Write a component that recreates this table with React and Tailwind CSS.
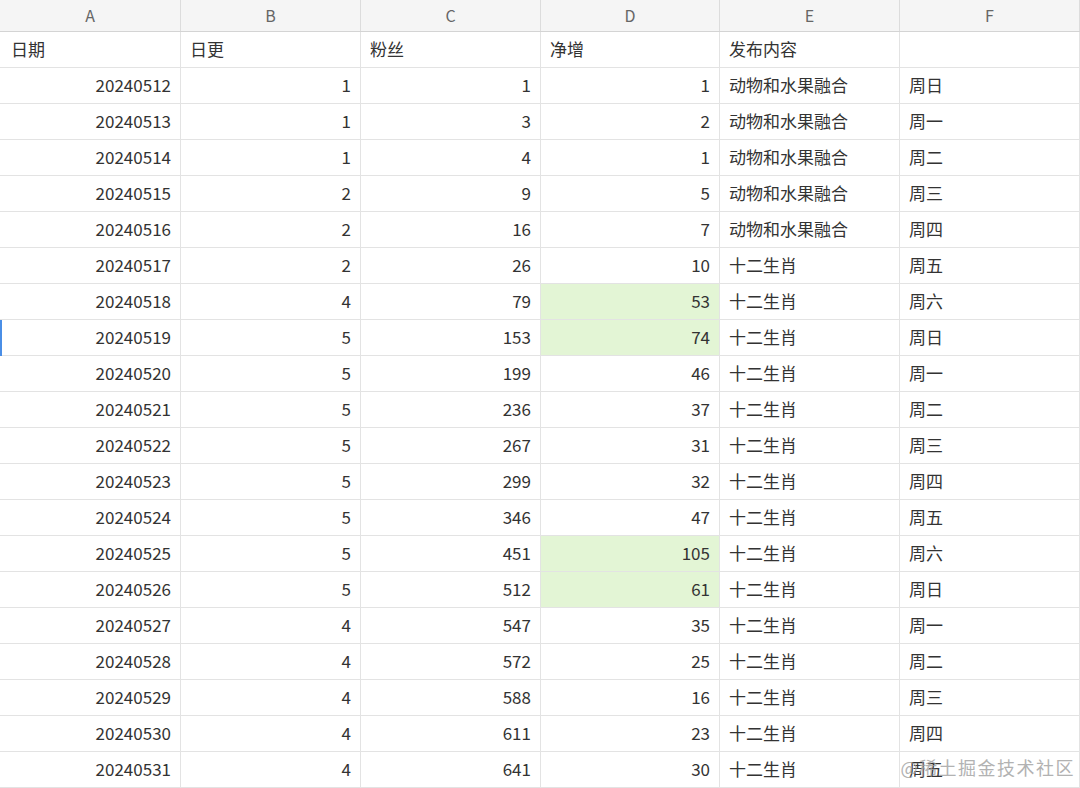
import React from "react";

const rows = [
  ["20240512", 1, 1, 1, "动物和水果融合", "周日"],
  ["20240513", 1, 3, 2, "动物和水果融合", "周一"],
  ["20240514", 1, 4, 1, "动物和水果融合", "周二"],
  ["20240515", 2, 9, 5, "动物和水果融合", "周三"],
  ["20240516", 2, 16, 7, "动物和水果融合", "周四"],
  ["20240517", 2, 26, 10, "十二生肖", "周五"],
  ["20240518", 4, 79, 53, "十二生肖", "周六", true],
  ["20240519", 5, 153, 74, "十二生肖", "周日", true],
  ["20240520", 5, 199, 46, "十二生肖", "周一"],
  ["20240521", 5, 236, 37, "十二生肖", "周二"],
  ["20240522", 5, 267, 31, "十二生肖", "周三"],
  ["20240523", 5, 299, 32, "十二生肖", "周四"],
  ["20240524", 5, 346, 47, "十二生肖", "周五"],
  ["20240525", 5, 451, 105, "十二生肖", "周六", true],
  ["20240526", 5, 512, 61, "十二生肖", "周日", true],
  ["20240527", 4, 547, 35, "十二生肖", "周一"],
  ["20240528", 4, 572, 25, "十二生肖", "周二"],
  ["20240529", 4, 588, 16, "十二生肖", "周三"],
  ["20240530", 4, 611, 23, "十二生肖", "周四"],
  ["20240531", 4, 641, 30, "十二生肖", "周五"],
];

const cols = "grid grid-cols-[181px_180px_180px_179px_180px_180px]";
const cell = "h-[36px] pb-[2px] border-r border-b border-[#e3e3e3] flex items-center";
const num = cell + " justify-end pr-[9px]";
const txt = cell + " pl-[9px]";

export default function App() {
  return (
    <div
      className="relative w-[1080px] h-[788px] overflow-hidden bg-white text-[17px] text-[#333]"
      style={{ fontFamily: '"Noto Sans CJK SC", "Noto Sans", sans-serif' }}
    >
      <div className={cols + " bg-[#f5f5f5] border-b border-[#d4d4d4]"}>
        {["A", "B", "C", "D", "E", "F"].map((c) => (
          <div
            key={c}
            className="h-[31px] pb-[2px] border-r border-[#dcdcdc] flex items-center justify-center text-[16px] text-[#666]"
          >
            {c}
          </div>
        ))}
      </div>

      <div className={cols}>
        <div className={cell + " pl-[11px]"}>日期</div>
        <div className={txt}>日更</div>
        <div className={txt}>粉丝</div>
        <div className={txt}>净增</div>
        <div className={txt}>发布内容</div>
        <div className={txt}></div>
      </div>

      {rows.map((r) => (
        <div key={r[0]} className={cols + " relative"}>
          {r[0] === "20240519" && (
            <div className="absolute left-0 top-0 h-[36px] w-[2px] bg-[#4a8ee6]" />
          )}
          <div className={num}>{r[0]}</div>
          <div className={num}>{r[1]}</div>
          <div className={num}>{r[2]}</div>
          <div className={num + (r[6] ? " bg-[#e3f5d5]" : "")}>{r[3]}</div>
          <div className={txt}>{r[4]}</div>
          <div className={txt}>{r[5]}</div>
        </div>
      ))}

      <div className="absolute right-[5px] bottom-[7px] text-[18px] text-[#a0a0a0] opacity-80 tracking-[1.5px]">
        @稀土掘金技术社区
      </div>
    </div>
  );
}
